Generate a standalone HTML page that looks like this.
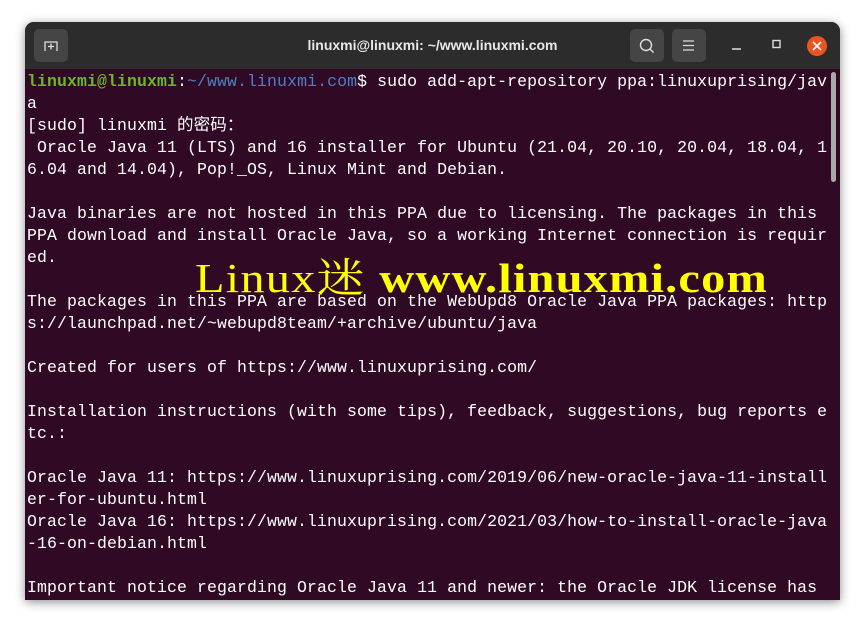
<!DOCTYPE html><html><head><style>
body{margin:0;width:866px;height:629px;background:#fff;overflow:hidden;position:relative}
.win{position:absolute;left:25px;top:22px;width:815px;height:578px;background:#300a24;border-radius:9px 9px 0 0;box-shadow:0 2px 10px rgba(0,0,0,.45);overflow:hidden}
.tb{position:absolute;left:0;top:0;width:815px;height:47px;background:#2c2c2c}
.btn{position:absolute;top:7px;width:34px;height:33px;background:#454545;border-radius:5px}
.title{position:absolute;top:0;left:0;width:815px;text-align:center;font:bold 14px "Liberation Sans",sans-serif;line-height:47px;color:#e8e8e8}
pre{position:absolute;left:2px;top:49px;margin:0;font:16.5px "Liberation Mono","Noto Sans CJK SC",monospace;line-height:22px;letter-spacing:0.1px;color:#fff}
.g{font-weight:bold;color:#6ab825}.b{color:#4d80c5}
.sb{position:absolute;left:806px;top:50px;width:5px;height:110px;background:#aaa;border-radius:3px}
.wm{position:absolute;left:170px;top:223px;font:41px "Liberation Serif","Noto Serif CJK SC",serif;color:#ffff00;white-space:nowrap;letter-spacing:1px;transform:scaleX(1.18);transform-origin:0 0}
</style></head><body><div class="win">
<div class="tb">
<div class="btn" style="left:9px"><svg width="34" height="33"><path d="M11 22V13h12v9" fill="none" stroke="#ddd" stroke-width="1.3"/><path d="M17 14.5v6M14 17.5h6" stroke="#ddd" stroke-width="1.3"/></svg></div>
<div class="title">linuxmi@linuxmi: ~/www.linuxmi.com</div>
<div class="btn" style="left:605px"><svg width="34" height="33"><circle cx="16" cy="16" r="5.5" fill="none" stroke="#ddd" stroke-width="1.4"/><path d="M20 20l3.5 3.5" stroke="#ddd" stroke-width="1.5"/></svg></div>
<div class="btn" style="left:647px"><svg width="34" height="33"><path d="M11 12h11M11 16.5h11M11 21h11" stroke="#ddd" stroke-width="1.3"/></svg></div>
<svg style="position:absolute;left:700px;top:10px" width="110" height="28"><path d="M7 17h9" stroke="#ddd" stroke-width="1.5"/><rect x="48" y="8.5" width="7" height="7" fill="none" stroke="#ddd" stroke-width="1.4"/><circle cx="92" cy="14" r="10" fill="#e95420"/><path d="M88 10l8 8M96 10l-8 8" stroke="#fff" stroke-width="1.6"/></svg>
</div>
<pre><span class="g">linuxmi@linuxmi</span>:<span class="b">~/www.linuxmi.com</span>$ sudo add-apt-repository ppa:linuxuprising/jav
a
[sudo] linuxmi 的密码：
 Oracle Java 11 (LTS) and 16 installer for Ubuntu (21.04, 20.10, 20.04, 18.04, 1
6.04 and 14.04), Pop!_OS, Linux Mint and Debian.

Java binaries are not hosted in this PPA due to licensing. The packages in this
PPA download and install Oracle Java, so a working Internet connection is requir
ed.

The packages in this PPA are based on the WebUpd8 Oracle Java PPA packages: http
s://launchpad.net/~webupd8team/+archive/ubuntu/java

Created for users of https://www.linuxuprising.com/

Installation instructions (with some tips), feedback, suggestions, bug reports e
tc.:

Oracle Java 11: https://www.linuxuprising.com/2019/06/new-oracle-java-11-install
er-for-ubuntu.html
Oracle Java 16: https://www.linuxuprising.com/2021/03/how-to-install-oracle-java
-16-on-debian.html

Important notice regarding Oracle Java 11 and newer: the Oracle JDK license has</pre>
<div class="sb"></div>
<div class="wm">Linux迷 <b>www.linuxmi.com</b></div>
</div></body></html>
